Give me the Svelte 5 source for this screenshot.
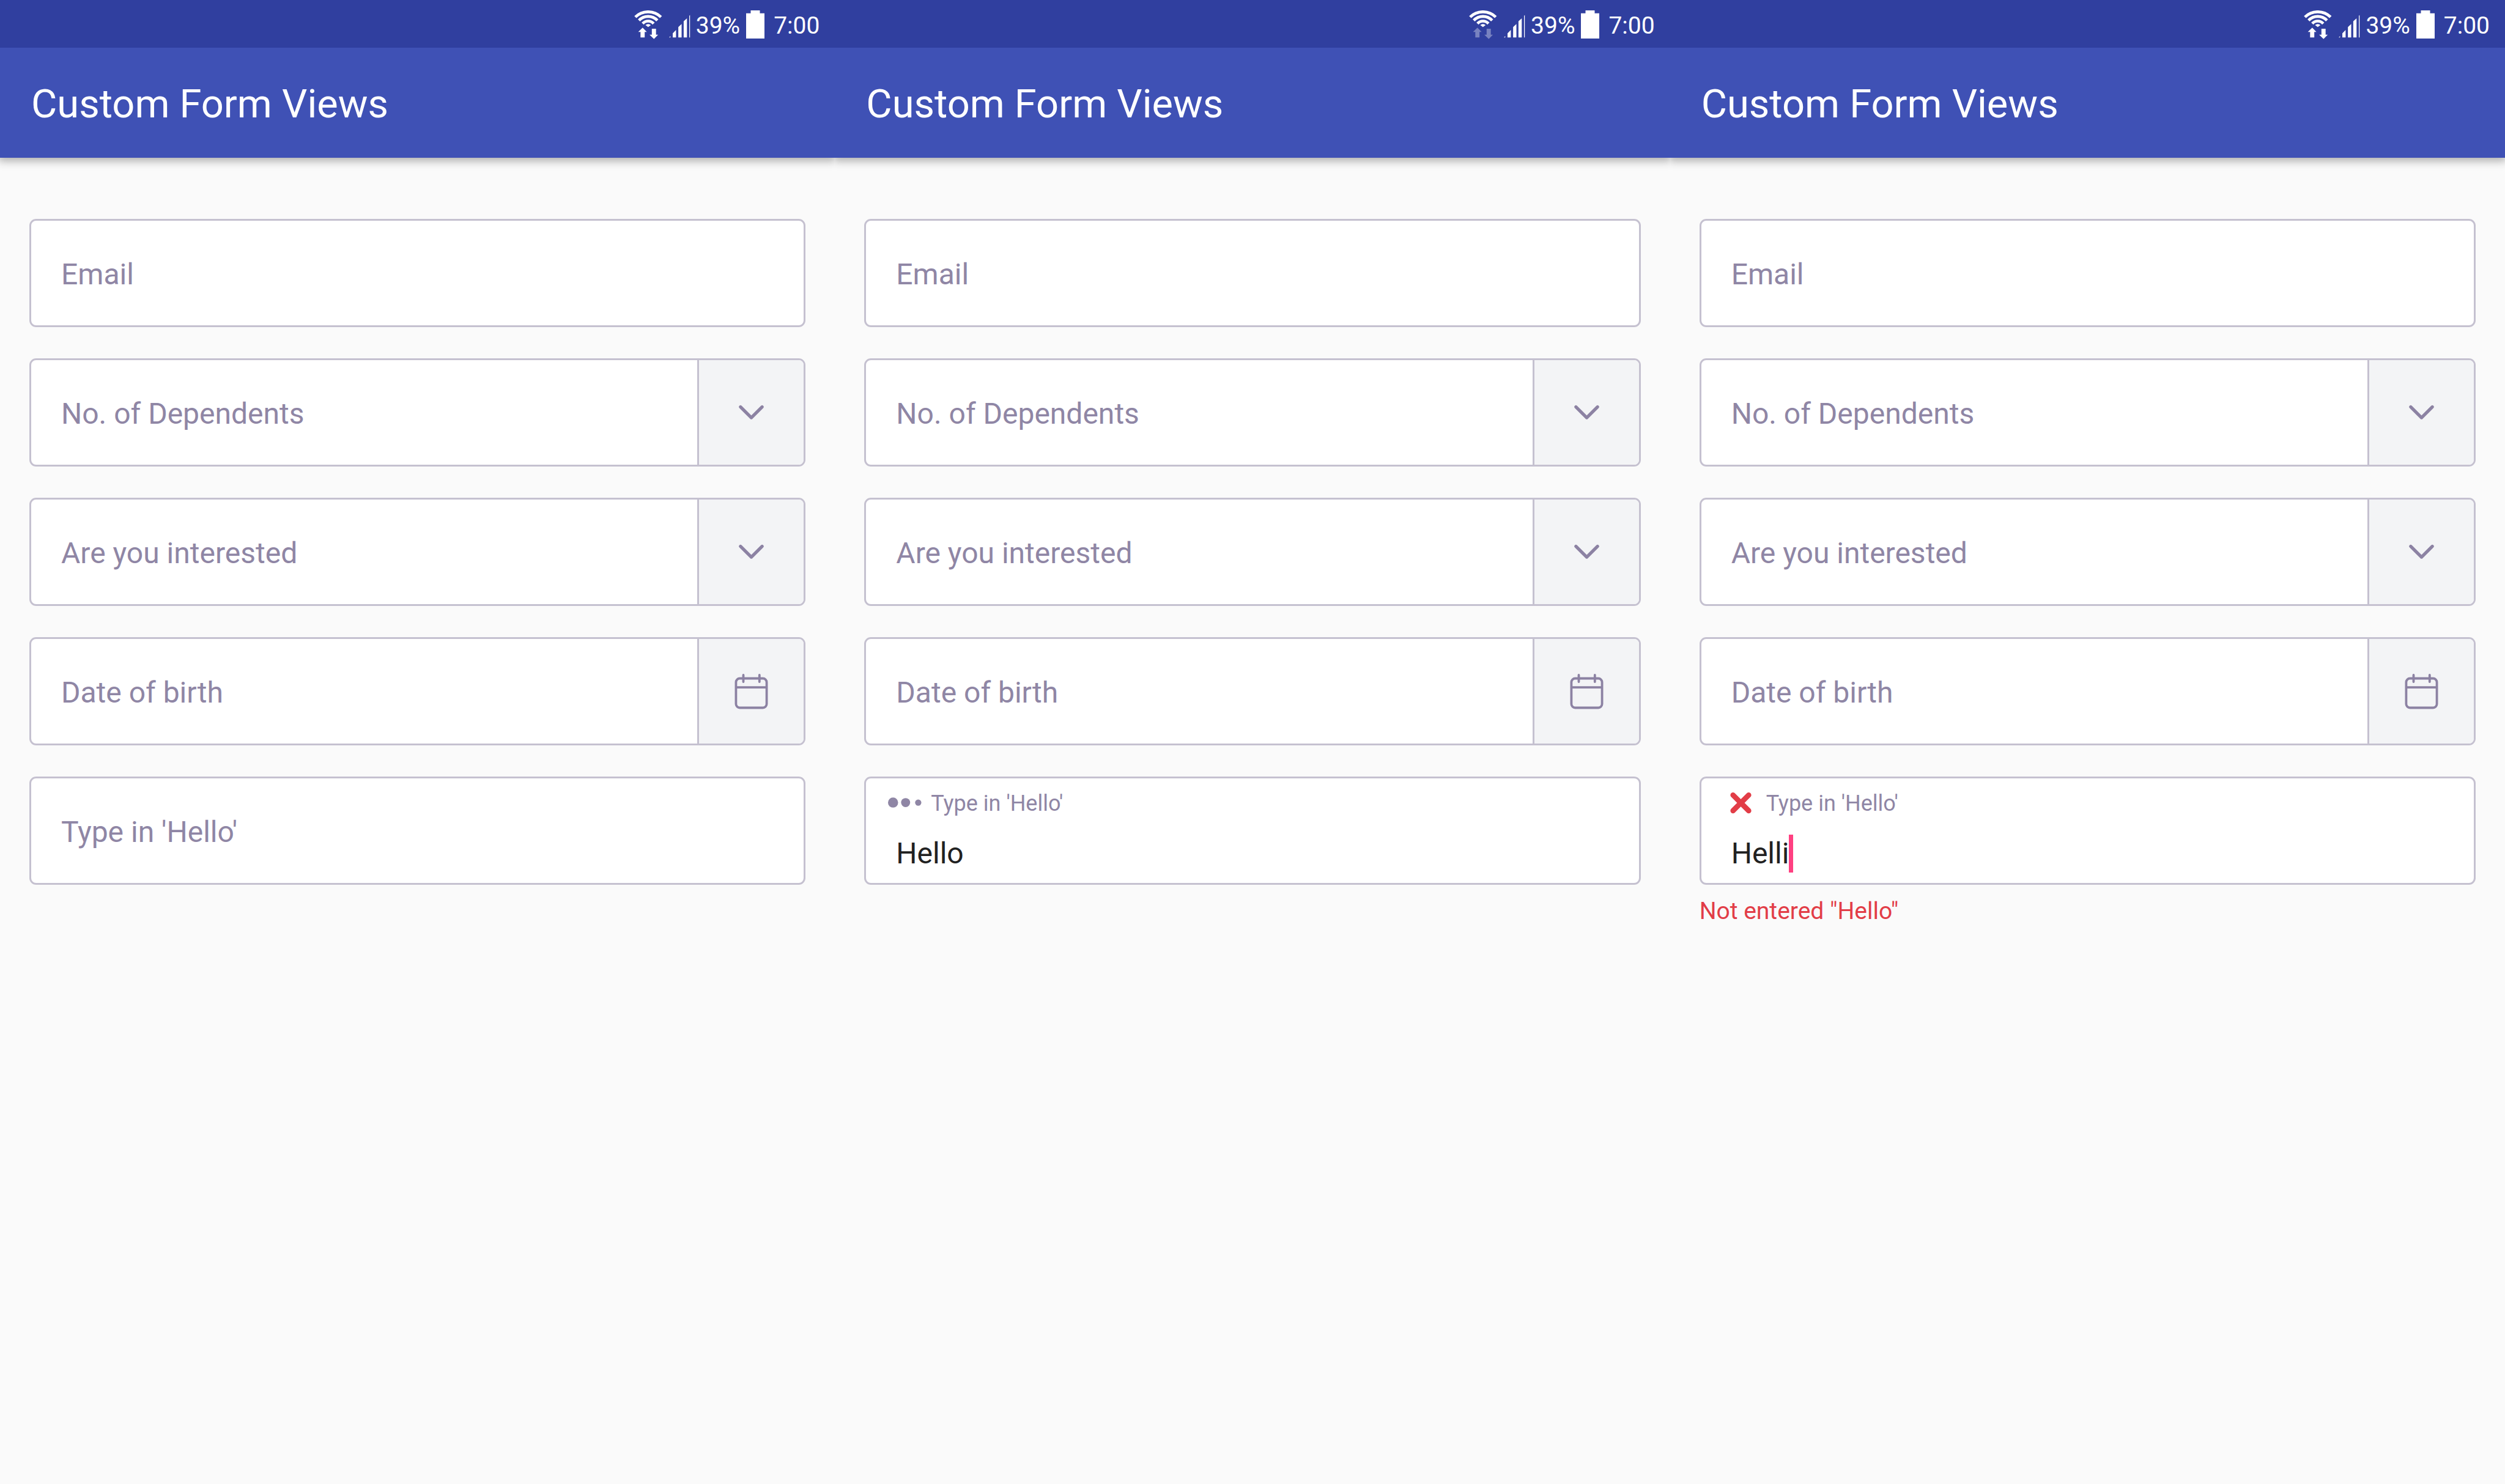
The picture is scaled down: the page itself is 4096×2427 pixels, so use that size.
<script>
  const screens = [
    { id: 'empty', idle: false, value: '', state: 'rest' },
    { id: 'pending', idle: true, value: 'Hello', state: 'pending' },
    { id: 'invalid', idle: false, value: 'Helli', state: 'error' }
  ];
</script>

{#snippet chevron()}
  <svg class="icon" viewBox="0 0 60 60" aria-hidden="true">
    <path d="M11.300 20.500 30 39 48.700 20.500" stroke-width="5.500" />
  </svg>
{/snippet}

<main>
  {#each screens as screen (screen.id)}
    <section class="phone">
      <div class="status">
        <svg class="wifi" viewBox="0 0 49 50" aria-hidden="true">
          <g fill="none" stroke="#fff" stroke-width="5">
            <path d="M2 11.5A32 32 0 0 1 46.6 11.5" />
            <path d="M8.3 17.3A22 22 0 0 1 40.3 17.3" />
            <path d="M14.8 23A12.5 12.5 0 0 1 33.8 23" />
          </g>
          <path fill="#fff" d="M19.6 25.4Q24.3 21.8 29 25.4L24.3 29Z" />
          <g class:idle={screen.idle} fill="#fff">
            <path d="M14.7 30 22 37.4H18.3V47H11V37.4H7Z" />
            <path d="M30.7 32H38V42.3H41.7L34.4 49.8 26.7 42.3H30.7Z" />
          </g>
        </svg>
        <svg class="signal" viewBox="0 0 37 50" aria-hidden="true">
          <path
            fill="#fff"
            d="M0 47 2.3 44.7V47ZM6.3 47V40L12 34V47ZM16 47V29L21.7 23.7V47ZM25.3 47V19L31 13.7V47ZM35 47V9.5L36.3 8V47Z"
          />
        </svg>
        <span class="charge">39%</span>
        <svg class="battery" viewBox="0 0 32 49" aria-hidden="true">
          <path fill="#fff" d="M8 0H24V5H32V49H0V5H8Z" />
        </svg>
        <time>7:00</time>
      </div>

      <header>
        <h1>Custom Form Views</h1>
      </header>

      <form>
        <div class="field">
          <input class="rest" type="text" aria-label="Email" placeholder="Email" />
        </div>

        <div class="field">
          <select class="rest" aria-label="No. of Dependents">
            <option>No. of Dependents</option>
          </select>
          <span class="addon">{@render chevron()}</span>
        </div>

        <div class="field">
          <select class="rest" aria-label="Are you interested">
            <option>Are you interested</option>
          </select>
          <span class="addon">{@render chevron()}</span>
        </div>

        <div class="field">
          <input class="rest" type="text" aria-label="Date of birth" placeholder="Date of birth" />
          <button class="addon" type="button" aria-label="Pick a date">
            <svg class="icon" viewBox="0 0 60 60" aria-hidden="true">
              <rect x="3.600" y="7.900" width="52.800" height="50.500" rx="6.500" stroke-width="4" />
              <path d="M4 23.300H56M16.300 2V13.700M44 2V13.700" stroke-width="4" />
            </svg>
          </button>
        </div>

        {#if screen.state === 'rest'}
          <div class="field">
            <input class="rest" type="text" aria-label="Type in 'Hello'" placeholder="Type in 'Hello'" />
          </div>
        {:else}
          <div class="group">
            <div class="field filled">
              <div class="caption">
                <svg class="mark" viewBox="0 0 60 40" aria-hidden="true">
                  {#if screen.state === 'pending'}
                    <g fill="#8f86a5">
                      <circle cx="8.700" cy="18.500" r="8.700" />
                      <circle cx="30.300" cy="18.500" r="7.800" />
                      <circle cx="52" cy="18.500" r="5.400" />
                    </g>
                  {:else}
                    <path
                      d="M16.500 5.500 43.500 32.500M43.500 5.500 16.500 32.500"
                      stroke="#e23d47"
                      stroke-width="9"
                      stroke-linecap="round"
                    />
                  {/if}
                </svg>
                <label for="hello-{screen.id}">Type in 'Hello'</label>
              </div>
              <div class="entry">
                <input id="hello-{screen.id}" type="text" value={screen.value} />
                {#if screen.state === 'error'}<span class="caret"></span>{/if}
              </div>
            </div>
            {#if screen.state === 'error'}
              <p class="error">Not entered "Hello"</p>
            {/if}
          </div>
        {/if}
      </form>
    </section>
  {/each}
</main>

<style>
  :global(body) {
    background: #fafafa;
  }

  main {
    display: flex;
    min-height: 100vh;
    font-family: Roboto, 'Noto Sans', sans-serif;
    color: #212121;
  }

  .phone {
    flex: 1 1 0;
    min-width: 0;
    overflow: hidden;
    background: #fafafa;
  }

  .status {
    position: relative;
    z-index: 1;
    box-sizing: border-box;
    height: 78px;
    padding: 2px 25px 0 0;
    display: flex;
    align-items: center;
    justify-content: flex-end;
    background: #303f9f;
    color: #fff;
    font-size: 39px;
    line-height: 48px;
  }

  .wifi {
    width: 46px;
    height: 47px;
    margin-right: 11px;
  }

  .idle {
    opacity: 0.35;
  }

  .signal {
    width: 35px;
    height: 47px;
    margin-right: 9px;
  }

  .charge,
  time {
    padding-top: 3px;
  }

  .battery {
    width: 30px;
    height: 46px;
    margin: 0 15px 0 10px;
  }

  header {
    padding: 53px 51px 49px;
    background: #3f51b5;
    color: #fff;
    box-shadow: 0 2px 14px 3px rgba(0, 0, 0, 0.32);
  }

  h1 {
    margin: 0;
    font-size: 65px;
    font-weight: 400;
    line-height: 78px;
  }

  form {
    display: flex;
    flex-direction: column;
    gap: 51px;
    padding: 100px 48px 48px;
  }

  .field {
    display: flex;
    border: 3px solid #c5c1d0;
    border-radius: 11px;
    background: #fff;
    overflow: hidden;
  }

  input,
  select {
    appearance: none;
    margin: 0;
    padding: 0;
    border: 0;
    outline: 0;
    background: none;
    font-family: inherit;
    font-size: 48px;
    line-height: 62px;
    color: #212121;
  }

  .rest {
    flex: 1;
    min-width: 0;
    height: 62px;
    box-sizing: content-box;
    padding: 57px 49px 52px;
  }

  select,
  .rest::placeholder {
    color: #8f86a5;
    opacity: 1;
  }

  .addon {
    flex: none;
    display: flex;
    align-items: center;
    justify-content: center;
    width: 174px;
    box-sizing: border-box;
    margin: 0;
    padding: 0;
    border: 0;
    border-left: 3px solid #c5c1d0;
    background: #f3f4f6;
  }

  .icon {
    width: 57px;
    height: 57px;
    overflow: visible;
    fill: none;
    stroke: #8c82a3;
    stroke-linecap: round;
    stroke-linejoin: round;
  }

  .filled {
    flex-direction: column;
    gap: 29px;
    padding: 19px 0 17px;
  }

  .caption {
    display: flex;
    align-items: center;
    padding-left: 36px;
    gap: 13px;
    font-size: 36px;
    line-height: 44px;
    color: #8f86a5;
  }

  .mark {
    width: 57px;
    height: 38px;
  }

  .entry {
    display: flex;
    height: 62px;
    padding: 0 49px;
  }

  .entry input {
    field-sizing: content;
    height: 62px;
  }

  .caret {
    width: 7px;
    background: #ff4081;
  }

  .error {
    margin: 19px 0 0;
    font-size: 39px;
    line-height: 48px;
    color: #e23d47;
  }
</style>
